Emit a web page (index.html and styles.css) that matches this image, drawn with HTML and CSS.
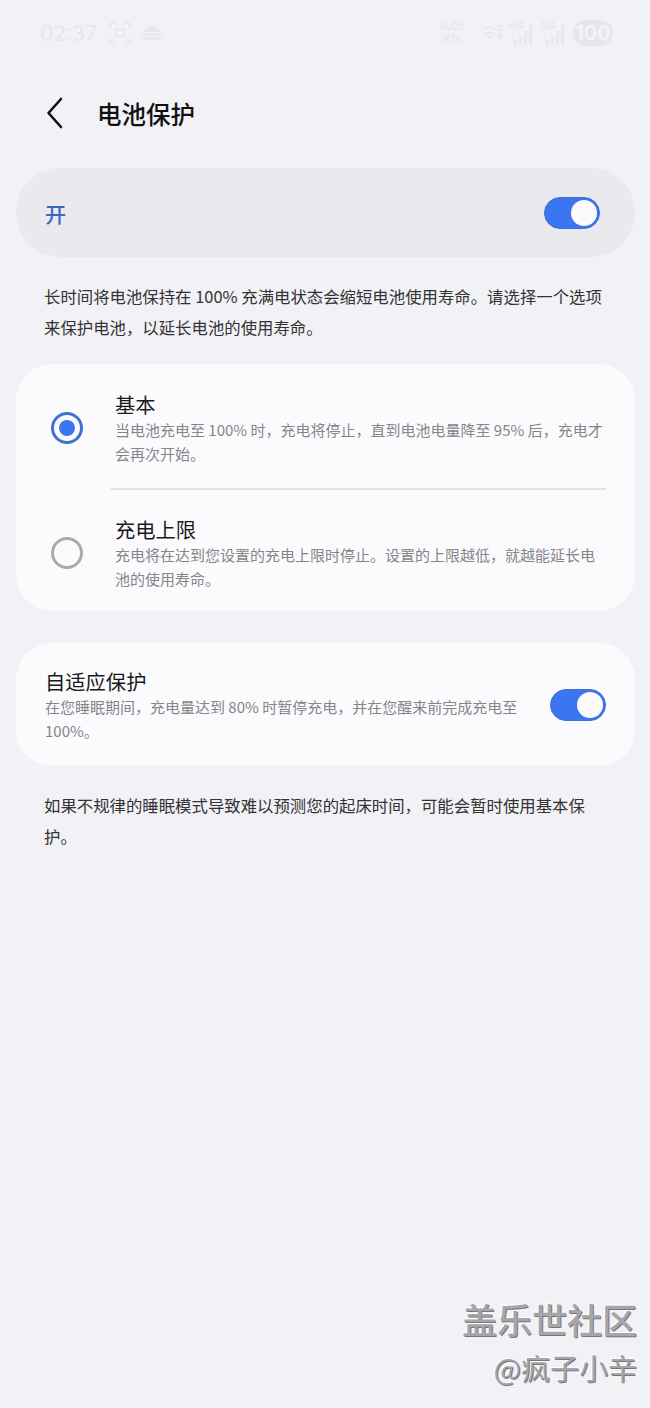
FILE: index.html
```html
<!DOCTYPE html>
<html lang="zh-CN">
  <head>
    <meta charset="UTF-8" />
    <meta name="viewport" content="width=device-width, initial-scale=1.0" />
    <title>电池保护</title>
    <link rel="stylesheet" href="styles.css">
  </head>
  <body>
    <div class="status-bar">
      <div class="status-left">
        <span class="clock">02:37</span>
        <svg class="status-icon" width="24" height="24" viewBox="0 0 24 24" fill="none" stroke="currentColor" stroke-width="2">
          <path d="M2 7V4a2 2 0 0 1 2-2h3M17 2h3a2 2 0 0 1 2 2v3M22 17v3a2 2 0 0 1-2 2h-3M7 22H4a2 2 0 0 1-2-2v-3" />
          <rect x="7.5" y="8.5" width="9" height="7" rx="1.5" />
        </svg>
        <svg class="status-icon" width="20" height="16" viewBox="0 0 20 16" fill="currentColor">
          <path d="M2 7a8 6.5 0 0 1 16 0z" />
          <rect x="0" y="8.5" width="20" height="2.2" />
          <rect x="3" y="12.5" width="14" height="2.2" />
        </svg>
      </div>
      <div class="status-right">
        <span class="net-speed">0.05<br>K/s</span>
        <svg class="status-icon" width="24" height="24" viewBox="0 0 24 24" fill="none" stroke="currentColor" stroke-width="2">
          <path d="M1 9c4-3 9-3 13 0M4 13c3-2 6-2 9 0M7 17c1.500-1 3-1 4 0" />
          <path d="M16 5h5M16 9h5M16 15h6M19 12v6" />
        </svg>
        <svg class="status-icon signal" width="28" height="28" viewBox="0 0 28 28" fill="currentColor">
          <rect x="5" y="21" width="3" height="5" />
          <rect x="10" y="17" width="3" height="9" />
          <rect x="15" y="12" width="3" height="14" />
          <rect x="20" y="6" width="3" height="20" />
          <text x="0" y="10" class="signal-label">4G</text>
        </svg>
        <svg class="status-icon signal" width="28" height="28" viewBox="0 0 28 28" fill="currentColor">
          <rect x="5" y="21" width="3" height="5" />
          <rect x="10" y="17" width="3" height="9" />
          <rect x="15" y="12" width="3" height="14" />
          <rect x="20" y="6" width="3" height="20" />
          <text x="0" y="10" class="signal-label">5G</text>
        </svg>
        <span class="battery">100</span>
      </div>
    </div>

    <header class="page-header">
      <svg class="back-icon" width="18" height="32" viewBox="0 0 18 32" fill="none" stroke="#111" stroke-width="2.6" stroke-linecap="round" stroke-linejoin="round">
        <path d="M15 2 L2.500 16 L15 30" />
      </svg>
      <h1 class="page-title">电池保护</h1>
    </header>

    <div class="master-switch">
      <span class="master-label">开</span>
      <span class="toggle"></span>
    </div>

    <p class="note note-top">长时间将电池保持在 100% 充满电状态会缩短电池使用寿命。请选择一个选项来保护电池，以延长电池的使用寿命。</p>

    <section class="card options">
      <div class="option">
        <span class="radio radio-on"></span>
        <div class="option-text">
          <div class="item-title">基本</div>
          <div class="item-desc">当电池充电至 100% 时，充电将停止，直到电池电量降至 95% 后，充电才会再次开始。</div>
        </div>
      </div>
      <div class="divider"></div>
      <div class="option">
        <span class="radio"></span>
        <div class="option-text">
          <div class="item-title">充电上限</div>
          <div class="item-desc">充电将在达到您设置的充电上限时停止。设置的上限越低，就越能延长电池的使用寿命。</div>
        </div>
      </div>
    </section>

    <section class="card adaptive">
      <div class="adaptive-text">
        <div class="item-title">自适应保护</div>
        <div class="item-desc">在您睡眠期间，充电量达到 80% 时暂停充电，并在您醒来前完成充电至 100%。</div>
      </div>
      <span class="toggle"></span>
    </section>

    <p class="note note-bottom">如果不规律的睡眠模式导致难以预测您的起床时间，可能会暂时使用基本保护。</p>

    <div class="watermark">
      <div class="watermark-site">盖乐世社区</div>
      <div class="watermark-user">@疯子小辛</div>
    </div>
  </body>
</html>
```

FILE: styles.css
```css
body {
  margin: 0;
  padding: 0;
  height: 1408px;
  background: #f1f1f6;
  font-family: "Noto Sans CJK SC", "Noto Sans", sans-serif;
  color: #222;
  overflow: hidden;
  position: relative;
}

/* Status bar, washed out in the capture */
.status-bar {
  height: 66px;
  padding: 0 37px 0 40px;
  display: flex;
  justify-content: space-between;
  align-items: center;
  color: #e7e7ec;
  box-sizing: border-box;
}

.status-left,
.status-right {
  display: flex;
  align-items: center;
}

.status-left {
  gap: 10px;
}

.status-right {
  gap: 4px;
}

.clock {
  font-family: "Inter", sans-serif;
  font-size: 21px;
  margin-right: 1px;
}

.net-speed {
  font-family: "Inter", sans-serif;
  font-size: 11.500px;
  font-weight: 600;
  line-height: 13px;
  text-align: center;
  margin-right: 12px;
}

.signal-label {
  font-family: "Inter", sans-serif;
  font-size: 10px;
  font-weight: 600;
}

.battery {
  width: 40px;
  height: 26px;
  border-radius: 13px;
  background: #e6e6eb;
  color: #f4f4f8;
  font-family: "Inter", sans-serif;
  font-size: 20px;
  font-weight: 600;
  line-height: 26px;
  text-align: center;
}

/* Header */
.page-header {
  height: 106px;
  padding: 0 0 0 46px;
  display: flex;
  align-items: center;
  box-sizing: border-box;
  padding-bottom: 12px;
}

.page-title {
  margin: 0 0 0 33px;
  font-size: 24.500px;
  font-weight: 500;
  color: #111;
}

/* On/off strip */
.master-switch {
  height: 89px;
  margin: -4px 15px 0 16px;
  padding: 0 35px 0 29px;
  background: #e9e9ee;
  border-radius: 44px;
  display: flex;
  justify-content: space-between;
  align-items: center;
}

.master-label {
  font-size: 21px;
  font-weight: 500;
  color: #3a68c4;
}

.toggle {
  width: 56px;
  height: 32px;
  border-radius: 16px;
  background: #3b76f0;
  border: 1px solid #3f70d4;
  box-sizing: border-box;
  display: flex;
  justify-content: flex-end;
  align-items: center;
  padding-right: 2px;
  flex-shrink: 0;
}

.toggle::after {
  content: "";
  width: 26px;
  height: 26px;
  border-radius: 50%;
  background: #fbfbfe;
}

/* Plain paragraphs between the cards */
.note {
  margin: 0;
  padding: 0 44px;
  font-size: 16.400px;
  line-height: 31px;
  color: #333;
}

.note-top {
  margin-top: 24px;
}

.note-bottom {
  margin-top: 24px;
}

.card {
  margin: 0 15px 0 16px;
  background: #fbfbfe;
  border-radius: 36px;
}

.options {
  margin-top: 21px;
  height: 247px;
  padding-top: 26px;
  box-sizing: border-box;
}

.option {
  display: flex;
  align-items: center;
  padding: 0 28px 0 35px;
}

.option-text {
  margin-left: 32px;
}

.item-title {
  font-size: 20.300px;
  line-height: 28px;
  color: #1a1a1a;
}

.item-desc {
  font-size: 15px;
  line-height: 24px;
  color: #85858a;
}

.radio {
  width: 32px;
  height: 32px;
  border: 3px solid #aaaaae;
  border-radius: 50%;
  box-sizing: border-box;
  flex-shrink: 0;
  display: flex;
  justify-content: center;
  align-items: center;
}

.radio-on {
  border-color: #3f70d4;
}

.radio-on::after {
  content: "";
  width: 16px;
  height: 16px;
  border-radius: 50%;
  background: #3b76f0;
}

.divider {
  height: 2px;
  margin: 22px 29px 25px 95px;
  background: #e2e2e6;
}

.adaptive {
  margin-top: 32px;
  height: 123px;
  padding: 0 29px;
  display: flex;
  justify-content: space-between;
  align-items: center;
}

.adaptive-text {
  width: 480px;
}

/* Watermark sits over the empty bottom of the page */
.watermark {
  position: absolute;
  right: 13px;
  bottom: 17px;
  text-align: right;
  color: #a6a6a8;
  text-shadow: 1px 1px 0 #77777a, -1px -1px 0 #fff;
}

.watermark-site {
  font-size: 35px;
  font-weight: 500;
  line-height: 48px;
}

.watermark-user {
  font-size: 29px;
  line-height: 48px;
}
```
